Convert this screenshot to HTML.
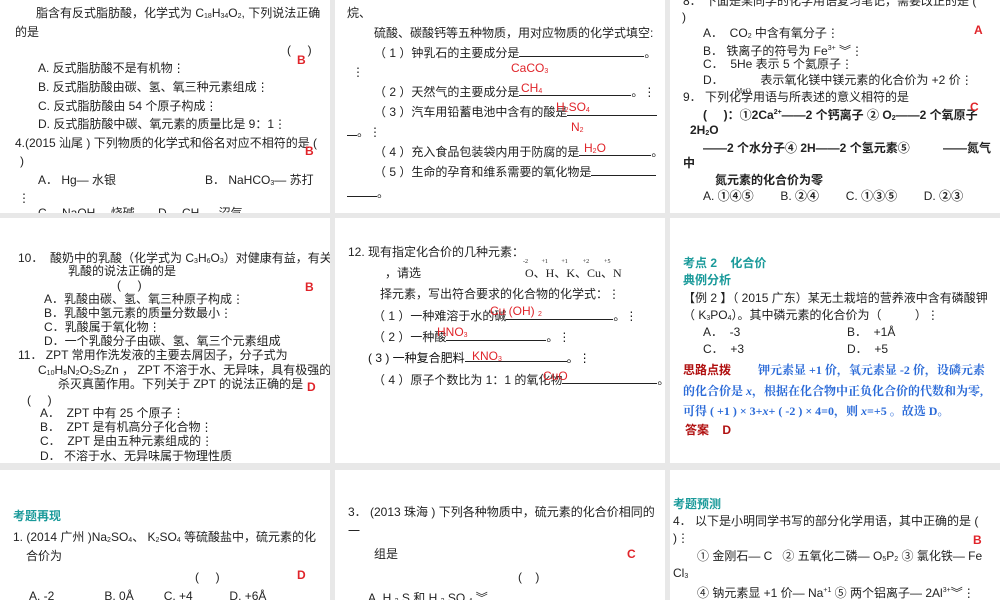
<!DOCTYPE html>
<html><head><meta charset="utf-8"><style>
body{margin:0;width:1000px;height:600px;background:#e8e8e8;position:relative;overflow:hidden;font-family:"Liberation Sans","Noto Sans CJK SC",sans-serif;font-size:12px;color:#222}
.s{position:absolute;background:#fff;overflow:hidden}
.t{position:absolute;white-space:nowrap;line-height:14px}
.r{position:absolute;color:#e0242a;font-weight:bold;font-size:12px;white-space:nowrap;line-height:14px}
.g{color:#1a9a9a;font-weight:bold}
.u{display:inline-block;border-bottom:1px solid #222;height:10px;vertical-align:baseline}
sub,sup{font-size:7px}
sub{vertical-align:-1px}
.b{color:#2a6ad8;font-family:"Liberation Serif","Noto Serif CJK SC",serif;font-weight:bold}
.dr{color:#b01010;font-weight:bold}
</style></head><body>

<div class="s" style="left:0;top:0;width:330px;height:213px">
<div class="t" style="left:36px;top:6px">脂含有反式脂肪酸，化学式为 C<sub>18</sub>H<sub>34</sub>O<sub>2</sub>, 下列说法正确</div>
<div class="t" style="left:15px;top:25px">的是</div>
<div class="t" style="left:287px;top:43px">(&nbsp;&nbsp;&nbsp;&nbsp;&nbsp;)</div>
<div class="r" style="left:297px;top:53px">B</div>
<div class="t" style="left:38px;top:61px">A. 反式脂肪酸不是有机物⋮</div>
<div class="t" style="left:38px;top:80px">B. 反式脂肪酸由碳、氢、氧三种元素组成⋮</div>
<div class="t" style="left:38px;top:99px">C. 反式脂肪酸由 54 个原子构成⋮</div>
<div class="t" style="left:38px;top:117px">D. 反式脂肪酸中碳、氧元素的质量比是 9：1⋮</div>
<div class="t" style="left:15px;top:136px">4.(2015 汕尾 ) 下列物质的化学式和俗名对应不相符的是 (</div>
<div class="r" style="left:305px;top:144px">B</div>
<div class="t" style="left:20px;top:154px">)</div>
<div class="t" style="left:38px;top:173px">A． Hg— 水银</div>
<div class="t" style="left:205px;top:173px">B． NaHCO<sub>3</sub>— 苏打</div>
<div class="t" style="left:18px;top:191px">⋮</div>
<div class="t" style="left:38px;top:206px">C． NaOH— 烧碱&nbsp;&nbsp;&nbsp;&nbsp;&nbsp;&nbsp;&nbsp;D． CH<sub>4</sub>— 沼气</div>
</div>

<div class="s" style="left:335px;top:0;width:330px;height:213px">
<div class="t" style="left:12px;top:6px">烷、</div>
<div class="t" style="left:39px;top:26px">硫酸、碳酸钙等五种物质，用对应物质的化学式填空:</div>
<div class="t" style="left:39px;top:46px">（ 1 ）钟乳石的主要成分是<span class="u" style="width:125px"></span>。</div>
<div class="t" style="left:17px;top:65px">⋮</div>
<div class="r" style="left:176px;top:61px;font-weight:normal">CaCO<sub>3</sub></div>
<div class="t" style="left:39px;top:85px">（ 2 ）天然气的主要成分是<span class="u" style="width:112px"></span>。⋮</div>
<div class="r" style="left:186px;top:81px;font-weight:normal">CH<sub>4</sub></div>
<div class="t" style="left:39px;top:105px">（ 3 ）汽车用铅蓄电池中含有的酸是<span class="u" style="width:90px"></span></div>
<div class="r" style="left:221px;top:100px;font-weight:normal">H<sub>2</sub>SO<sub>4</sub></div>
<div class="t" style="left:12px;top:125px"><span class="u" style="width:10px"></span>。⋮</div>
<div class="r" style="left:236px;top:120px;font-weight:normal">N<sub>2</sub></div>
<div class="t" style="left:39px;top:145px">（ 4 ）充入食品包装袋内用于防腐的是<span class="u" style="width:72px"></span>。</div>
<div class="r" style="left:249px;top:141px;font-weight:normal">H<sub>2</sub>O</div>
<div class="t" style="left:39px;top:165px">（ 5 ）生命的孕育和维系需要的氧化物是<span class="u" style="width:65px"></span></div>
<div class="t" style="left:12px;top:186px"><span class="u" style="width:30px"></span>。</div>
</div>

<div class="s" style="left:670px;top:0;width:330px;height:213px">
<div class="t" style="left:13px;top:-6px">8． 下面是某同学的化学用语复习笔记，需要改正的是 (</div>
<div class="t" style="left:12px;top:10px">)</div>
<div class="t" style="left:33px;top:26px">A．&nbsp; CO<sub>2</sub> 中含有氧分子⋮</div>
<div class="r" style="left:304px;top:23px">A</div>
<div class="t" style="left:33px;top:42px">B．&nbsp;铁离子的符号为 Fe<sup>3+</sup> ︾⋮</div>
<div class="t" style="left:33px;top:57px">C．&nbsp; 5He 表示 5 个氦原子⋮</div>
<div class="t" style="left:33px;top:73px">D．&nbsp;&nbsp;&nbsp;&nbsp;&nbsp;&nbsp;&nbsp;&nbsp;&nbsp;&nbsp;&nbsp;表示氧化镁中镁元素的化合价为 +2 价⋮</div>
<div class="t" style="left:13px;top:90px">9． 下列化学用语与所表述的意义相符的是</div>
<div class="t" style="left:66px;top:84px;font-size:7px;font-family:'Liberation Serif',serif">MgO</div>
<div class="t" style="left:33px;top:106px;font-weight:bold">(&nbsp;&nbsp;&nbsp;&nbsp;&nbsp;)：①2Ca<sup>2+</sup>——2 个钙离子 ② O<sub>2</sub>——2 个氧原子</div>
<div class="r" style="left:300px;top:100px">C</div>
<div class="t" style="left:20px;top:123px;font-weight:bold">2H<sub>2</sub>O</div>
<div class="t" style="left:33px;top:141px;font-weight:bold">——2 个水分子④ 2H——2 个氢元素⑤&nbsp;&nbsp;&nbsp;&nbsp;&nbsp;&nbsp;&nbsp;&nbsp;&nbsp;&nbsp;——氮气</div>
<div class="t" style="left:13px;top:156px;font-weight:bold">中</div>
<div class="t" style="left:45px;top:173px;font-weight:bold">氮元素的化合价为零</div>
<div class="t" style="left:33px;top:189px">A. <b>①④⑤</b>&nbsp;&nbsp;&nbsp;&nbsp;&nbsp;&nbsp;&nbsp;&nbsp;B. <b>②④</b>&nbsp;&nbsp;&nbsp;&nbsp;&nbsp;&nbsp;&nbsp;&nbsp;C. <b>①③⑤</b>&nbsp;&nbsp;&nbsp;&nbsp;&nbsp;&nbsp;&nbsp;&nbsp;D. <b>②③</b></div>
</div>

<div class="s" style="left:0;top:218px;width:330px;height:245px">
<div class="t" style="left:18px;top:33px">10．&nbsp;&nbsp;酸奶中的乳酸（化学式为 C<sub>3</sub>H<sub>6</sub>O<sub>3</sub>）对健康有益，有关</div>
<div class="t" style="left:68px;top:46px">乳酸的说法正确的是</div>
<div class="t" style="left:117px;top:60px">(&nbsp;&nbsp;&nbsp;&nbsp;&nbsp;)</div>
<div class="r" style="left:305px;top:62px">B</div>
<div class="t" style="left:44px;top:74px">A．乳酸由碳、氢、氧三种原子构成⋮</div>
<div class="t" style="left:44px;top:88px">B．乳酸中氢元素的质量分数最小⋮</div>
<div class="t" style="left:44px;top:102px">C．乳酸属于氧化物⋮</div>
<div class="t" style="left:44px;top:116px">D．一个乳酸分子由碳、氢、氧三个元素组成</div>
<div class="t" style="left:18px;top:130px">11． ZPT 常用作洗发液的主要去屑因子，分子式为</div>
<div class="t" style="left:38px;top:145px">C<sub>10</sub>H<sub>8</sub>N<sub>2</sub>O<sub>2</sub>S<sub>2</sub>Zn ， ZPT 不溶于水、无异味，具有极强的</div>
<div class="t" style="left:58px;top:159px">杀灭真菌作用。下列关于 ZPT 的说法正确的是</div>
<div class="r" style="left:307px;top:162px">D</div>
<div class="t" style="left:27px;top:175px">(&nbsp;&nbsp;&nbsp;&nbsp;&nbsp;)</div>
<div class="t" style="left:40px;top:188px">A．&nbsp;&nbsp;ZPT 中有 25 个原子⋮</div>
<div class="t" style="left:40px;top:202px">B．&nbsp;&nbsp;ZPT 是有机高分子化合物⋮</div>
<div class="t" style="left:40px;top:216px">C．&nbsp;&nbsp;ZPT 是由五种元素组成的⋮</div>
<div class="t" style="left:40px;top:231px">D．&nbsp;不溶于水、无异味属于物理性质</div>
</div>

<div class="s" style="left:335px;top:218px;width:330px;height:245px">
<div class="t" style="left:13px;top:27px">12. 现有指定化合价的几种元素：</div>
<div class="t" style="left:50px;top:48px">，请选</div>
<div class="t" style="left:190px;top:48px;font-family:'Liberation Serif',serif">O、H、K、Cu、N</div>
<div class="t" style="left:188px;top:37px;font-size:6px;font-family:'Liberation Serif',serif">-2&nbsp;&nbsp;&nbsp;&nbsp;&nbsp;&nbsp;&nbsp;&nbsp;&nbsp;+1&nbsp;&nbsp;&nbsp;&nbsp;&nbsp;&nbsp;&nbsp;&nbsp;&nbsp;+1&nbsp;&nbsp;&nbsp;&nbsp;&nbsp;&nbsp;&nbsp;&nbsp;&nbsp;&nbsp;+2&nbsp;&nbsp;&nbsp;&nbsp;&nbsp;&nbsp;&nbsp;&nbsp;&nbsp;&nbsp;+5</div>
<div class="t" style="left:45px;top:69px">择元素，写出符合要求的化合物的化学式：⋮</div>
<div class="t" style="left:38px;top:91px">（ 1 ）一种难溶于水的碱<span class="u" style="width:107px"></span>。⋮</div>
<div class="r" style="left:155px;top:86px;font-weight:normal">Cu (OH) <sub>2</sub></div>
<div class="t" style="left:38px;top:112px">（ 2 ）一种酸<span class="u" style="width:100px"></span>。⋮</div>
<div class="r" style="left:102px;top:107px;font-weight:normal">HNO<sub>3</sub></div>
<div class="t" style="left:33px;top:133px;color:#111">( 3 ) 一种复合肥料<span class="u" style="width:102px"></span>。⋮</div>
<div class="r" style="left:137px;top:131px;font-weight:normal">KNO<sub>3</sub></div>
<div class="t" style="left:38px;top:155px">（ 4 ）原子个数比为 1：1 的氧化物<span class="u" style="width:95px"></span>。</div>
<div class="r" style="left:208px;top:151px;font-weight:normal">CuO</div>
</div>

<div class="s" style="left:670px;top:218px;width:330px;height:245px">
<div class="t g" style="left:13px;top:38px">考点 2&nbsp;&nbsp;&nbsp;&nbsp;化合价</div>
<div class="t g" style="left:13px;top:55px">典例分析</div>
<div class="t" style="left:13px;top:73px">【例 2 】（ 2015 广东）某无土栽培的营养液中含有磷酸钾</div>
<div class="t" style="left:13px;top:90px">（ K<sub>3</sub>PO<sub>4</sub>）。其中磷元素的化合价为（&nbsp;&nbsp;&nbsp;&nbsp;&nbsp;&nbsp;&nbsp;&nbsp;&nbsp;&nbsp;）⋮</div>
<div class="t" style="left:33px;top:107px">A．&nbsp;&nbsp;-3</div>
<div class="t" style="left:177px;top:107px">B．&nbsp;&nbsp;+1Å</div>
<div class="t" style="left:33px;top:124px">C．&nbsp;&nbsp;+3</div>
<div class="t" style="left:177px;top:124px">D．&nbsp;&nbsp;+5</div>
<div class="t dr" style="left:13px;top:145px">思路点拨</div>
<div class="t b" style="left:88px;top:145px">钾元素显 +1 价，氧元素显 -2 价，设磷元素</div>
<div class="t b" style="left:13px;top:166px">的化合价是 <i>x</i>，根据在化合物中正负化合价的代数和为零,</div>
<div class="t b" style="left:13px;top:186px">可得 ( +1 ) × 3+<i>x</i>+ ( -2 ) × 4=0，则 <i>x</i>=+5 。故选 D。</div>
<div class="t dr" style="left:15px;top:205px">答案&nbsp;&nbsp;&nbsp;&nbsp;D</div>
</div>

<div class="s" style="left:0;top:470px;width:330px;height:130px">
<div class="t g" style="left:13px;top:39px">考题再现</div>
<div class="t" style="left:13px;top:60px">1. (2014 广州 )Na<sub>2</sub>SO<sub>4</sub>、 K<sub>2</sub>SO<sub>4</sub> 等硫酸盐中，硫元素的化</div>
<div class="t" style="left:26px;top:79px">合价为</div>
<div class="t" style="left:195px;top:100px">(&nbsp;&nbsp;&nbsp;&nbsp;&nbsp;)</div>
<div class="r" style="left:297px;top:98px">D</div>
<div class="t" style="left:29px;top:119px">A. -2&nbsp;&nbsp;&nbsp;&nbsp;&nbsp;&nbsp;&nbsp;&nbsp;&nbsp;&nbsp;&nbsp;&nbsp;&nbsp;&nbsp;&nbsp;B. 0Å&nbsp;&nbsp;&nbsp;&nbsp;&nbsp;&nbsp;&nbsp;&nbsp;&nbsp;C. +4&nbsp;&nbsp;&nbsp;&nbsp;&nbsp;&nbsp;&nbsp;&nbsp;&nbsp;&nbsp;&nbsp;D. +6Å</div>
</div>

<div class="s" style="left:335px;top:470px;width:330px;height:130px">
<div class="t" style="left:13px;top:35px">3．&nbsp;(2013 珠海 ) 下列各种物质中，硫元素的化合价相同的</div>
<div class="t" style="left:13px;top:54px">一</div>
<div class="t" style="left:39px;top:77px">组是</div>
<div class="r" style="left:292px;top:77px">C</div>
<div class="t" style="left:183px;top:100px">(&nbsp;&nbsp;&nbsp;&nbsp;)</div>
<div class="t" style="left:33px;top:121px">A. H <sub>2</sub> S 和 H <sub>2</sub> SO <sub>4</sub> ︾</div>
</div>

<div class="s" style="left:670px;top:470px;width:330px;height:130px">
<div class="t g" style="left:3px;top:27px">考题预测</div>
<div class="t" style="left:3px;top:44px">4． 以下是小明同学书写的部分化学用语，其中正确的是 (</div>
<div class="t" style="left:3px;top:61px">)⋮</div>
<div class="r" style="left:303px;top:63px">B</div>
<div class="t" style="left:27px;top:79px">① 金刚石— C&nbsp;&nbsp; ② 五氧化二磷— O<sub>5</sub>P<sub>2</sub> ③ 氯化铁— Fe</div>
<div class="t" style="left:3px;top:96px">Cl<sub>3</sub></div>
<div class="t" style="left:27px;top:114px">④ 钠元素显 +1 价— Na<sup>+1</sup> ⑤ 两个铝离子— 2Al<sup>3+</sup>︾⋮</div>
</div>

</body></html>
